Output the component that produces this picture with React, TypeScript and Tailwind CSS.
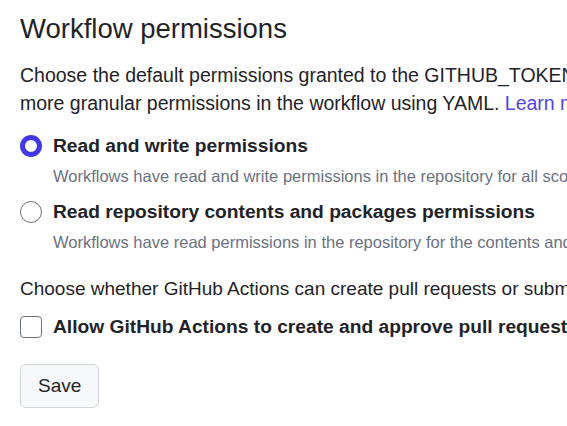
export default function App() {
  return (
    <div className="h-[426px] w-[567px] overflow-hidden bg-white font-['Liberation_Sans',Arial,sans-serif] text-[#1f2328]">
      <div className="w-[900px] whitespace-nowrap px-5 pt-[12px]">
        <h2 className="text-[27.5px] leading-[34px] text-[#1f2328]">Workflow permissions</h2>

        <p className="mt-[15px] text-[19.5px] leading-[28px]">
          Choose the default permissions granted to the GITHUB_TOKEN when running workflows in this repository. You can specify
          <br />
          more granular permissions in the workflow using YAML.{" "}
          <a href="#" className="text-[#4f46e5]">
            Learn more about managing permissions.
          </a>
        </p>

        <div className="mt-[17px] space-y-[12px]">
          <label className="flex items-start gap-[11px]">
            <span className="mt-[1px] h-[22px] w-[22px] shrink-0 rounded-full border-[5px] border-[#4338e6] bg-white" />
            <span>
              <span className="block text-[19.2px] font-bold leading-[24px]">Read and write permissions</span>
              <span className="mt-[6px] block text-[16.5px] leading-[24px] text-[#6b7280]">
                Workflows have read and write permissions in the repository for all scopes.
              </span>
            </span>
          </label>
          <label className="flex items-start gap-[11px]">
            <span className="mt-[1px] h-[22px] w-[22px] shrink-0 rounded-full border border-[#6b7280] bg-white" />
            <span>
              <span className="block text-[19.2px] font-bold leading-[24px]">
                Read repository contents and packages permissions
              </span>
              <span className="mt-[6px] block text-[16.5px] leading-[24px] text-[#6b7280]">
                Workflows have read permissions in the repository for the contents and packages scopes only.
              </span>
            </span>
          </label>
        </div>

        <p className="mt-[21px] text-[19px] leading-[28px]">
          Choose whether GitHub Actions can create pull requests or submit approving pull request reviews.
        </p>

        <label className="mt-[12px] flex items-center gap-[11px]">
          <span className="h-[22px] w-[22px] shrink-0 rounded-[4px] border border-[#6b7280] bg-white" />
          <span className="text-[19.2px] font-bold leading-[24px]">
            Allow GitHub Actions to create and approve pull requests
          </span>
        </label>

        <button className="mt-[25px] h-[44px] rounded-[6px] border border-[#d1d5db] bg-[#f6f8fa] px-[17px] text-[19px] text-[#1f2328]">
          Save
        </button>
      </div>
    </div>
  );
}
